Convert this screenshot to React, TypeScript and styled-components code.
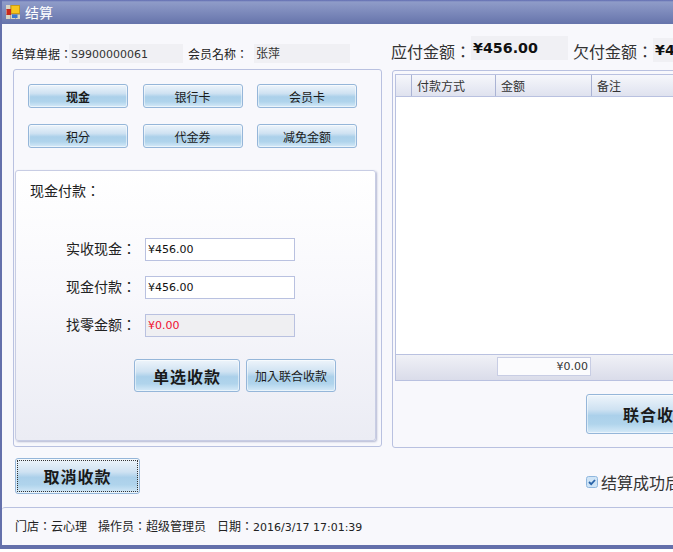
import React from "react";
import styled, { createGlobalStyle, css } from "styled-components";

const Global = createGlobalStyle`
  html, body {
    margin: 0;
    padding: 0;
    background: #ffffff;
    overflow: hidden;
  }
  * {
    box-sizing: border-box;
  }
`;

const FONT = `"Noto Sans CJK TC", "Noto Sans CJK SC", sans-serif`;
const LINE = "#b9c1e0";
const glossy = css`
  background: linear-gradient(180deg, #eef5fb 0%, #cfe2f2 38%, #abd0ea 54%, #b0d4ec 76%, #d6eaf8 100%);
  border: 1px solid #95b6d9;
  border-radius: 3px;
  box-shadow: inset 0 0 0 1px rgba(255, 255, 255, 0.5);
  color: #1a1a1a;
  font-family: ${FONT};
  padding: 0;
  white-space: nowrap;
  flex: none;
`;

const Window = styled.div`
  width: 673px;
  height: 549px;
  overflow: hidden;
  display: flex;
  flex-direction: column;
  background: #f8f8fc;
  font-family: ${FONT};
  color: #222;
  border-left: 2px solid #6470ab;
  border-bottom: 4px solid #6470ab;
`;

const TitleBar = styled.div`
  height: 24px;
  margin-left: -2px;
  flex: none;
  display: flex;
  align-items: center;
  gap: 5px;
  padding-left: 6px;
  background: linear-gradient(180deg, #5f6bb0 0, #8f9cc8 8%, #7f8cbd 45%, #6674ab 100%);
  color: #fff;
  font-size: 14px;
`;

const Content = styled.div`
  flex: 1;
  display: grid;
  grid-template-columns: 369px 400px;
  column-gap: 10px;
  padding: 0 0 0 11px;
  align-content: start;
`;

const Column = styled.div`
  display: flex;
  flex-direction: column;
`;

const Num = styled.span`
  font-family: "DejaVu Sans", sans-serif;
  font-size: 11px;
`;

const MemberRow = styled.div`
  height: 45px;
  padding: 20px 0 6px 0;
  margin-left: -1px;
  display: flex;
  align-items: center;
  font-size: 12px;
`;

const ReadOnly = styled.span<{ $w: number }>`
  width: ${(p) => p.$w}px;
  height: 19px;
  line-height: 18px;
  padding-left: 2px;
  background: #f0f0f4;
  color: #333;
  font-size: 12px;
`;

const MemberLabel = styled.span<{ $w: number; $gap?: number }>`
  width: ${(p) => p.$w}px;
  margin-left: ${(p) => p.$gap ?? 0}px;
  white-space: nowrap;
  line-height: 18px;
`;

const Panel = styled.div`
  height: 378px;
  border: 1px solid ${LINE};
  border-radius: 3px;
  background: #f8f8fc;
  padding: 14px 0 0 1px;
`;

const ModeGrid = styled.div`
  display: grid;
  grid-template-columns: repeat(3, 100px);
  grid-auto-rows: 24px;
  column-gap: 14.5px;
  row-gap: 16px;
  padding-left: 13px;
`;

const ModeButton = styled.button<{ $active?: boolean }>`
  ${glossy}
  font-size: 12px;
  font-weight: ${(p) => (p.$active ? 700 : 400)};
`;

const Card = styled.div`
  width: 361px;
  height: 271px;
  margin-top: 22px;
  border: 1px solid #c8cde4;
  border-radius: 3px;
  background: linear-gradient(180deg, #ffffff 0%, #f8f8fc 45%, #ebecf4 100%);
  box-shadow: 1px 1px 2px #b3b8d2;
  padding: 11px 0 0 14px;
`;

const CardTitle = styled.div`
  font-size: 14px;
  line-height: 16px;
  height: 56px;
`;

const FieldRow = styled.div`
  display: flex;
  align-items: center;
  height: 23px;
  margin-bottom: 15px;
`;

const FieldLabel = styled.span`
  width: 115px;
  text-align: right;
  padding: 0 9px 3px 0;
  font-size: 14px;
  white-space: nowrap;
`;

const Field = styled.div<{ $disabled?: boolean }>`
  width: 150px;
  height: 23px;
  line-height: 22px;
  padding-left: 2px;
  border: 1px solid ${LINE};
  background: ${(p) => (p.$disabled ? "#efeff2" : "#fff")};
  color: ${(p) => (p.$disabled ? "#f01030" : "#111")};
  font-family: "DejaVu Sans", sans-serif;
  font-size: 11px;
`;

const ActionRow = styled.div`
  display: flex;
  gap: 6px;
  padding: 7px 0 0 104px;
`;

const BigButton = styled.button<{ $w: number; $h: number }>`
  ${glossy}
  width: ${(p) => p.$w}px;
  height: ${(p) => p.$h}px;
  font-size: 16px;
  font-weight: 700;
  letter-spacing: 1px;
`;

const SmallAction = styled.button`
  ${glossy}
  width: 90px;
  height: 33px;
  font-size: 12px;
`;

const AmountRow = styled.div`
  height: 46px;
  padding-top: 12px;
  margin-left: -1px;
  display: flex;
  align-items: flex-start;
  font-size: 16px;
  white-space: nowrap;
`;

const AmountLabel = styled.span`
  line-height: 30px;
  color: #333;
`;

const AmountValue = styled.span<{ $w: number; $drop?: number }>`
  width: ${(p) => p.$w}px;
  height: 24px;
  line-height: 24px;
  padding-left: 2px;
  margin-right: 5px;
  margin-top: ${(p) => p.$drop ?? 0}px;
  background: #f0f0f4;
  color: #111;
  font-family: "DejaVu Sans", sans-serif;
  font-size: 14.25px;
  font-weight: 700;
`;

const RightPanel = styled.div`
  height: 378px;
  border: 1px solid ${LINE};
  border-radius: 3px;
  display: flex;
  flex-direction: column;
  margin-top: 0;
`;

const GridBox = styled.div`
  margin: 3px 0 0 2px;
  height: 307px;
  border: 1px solid ${LINE};
  display: flex;
  flex-direction: column;
  background: #fff;
`;

const GridHead = styled.div`
  display: flex;
  height: 22px;
  flex: none;
  background: linear-gradient(180deg, #f6f7fb, #dfe2ef);
  border-bottom: 1px solid ${LINE};
  font-size: 12px;
`;

const HeadCell = styled.div<{ $w: number }>`
  width: ${(p) => p.$w}px;
  flex: none;
  border-right: 1px solid #aab3d4;
  padding-left: 5px;
  line-height: 22px;
  color: #333;
`;

const GridBody = styled.div`
  flex: 1;
`;

const GridFoot = styled.div`
  height: 26px;
  flex: none;
  padding: 2px 0 0 101px;
  border-top: 1px solid ${LINE};
  background: linear-gradient(180deg, #f0f1f6, #dadcea);
`;

const SumBox = styled.div`
  width: 94px;
  height: 19px;
  line-height: 18px;
  padding-right: 2px;
  text-align: right;
  background: #fbfbfd;
  border: 1px solid #c8cde4;
  font-family: "DejaVu Sans", sans-serif;
  font-size: 11px;
  color: #333;
`;

const JoinRow = styled.div`
  padding: 13px 0 0 193px;
`;

const Footer = styled.div`
  display: flex;
  justify-content: flex-start;
  align-items: flex-start;
  height: 59px;
  padding: 10px 0 0 13px;
  flex: none;
`;

const CancelButton = styled.button`
  ${glossy}
  width: 125px;
  height: 36px;
  font-size: 16px;
  font-weight: 700;
  letter-spacing: 1px;
  outline: 1px dotted #333;
  outline-offset: -3px;
`;

const SuccessOption = styled.label`
  margin-left: 446px;
  margin-top: 12px;
  flex: none;
  display: flex;
  align-items: center;
  gap: 3px;
  font-size: 16px;
  white-space: nowrap;
  color: #333;
`;

const CheckMark = styled.svg`
  flex: none;
  width: 12px;
  height: 12px;
`;

const StatusBar = styled.div`
  flex: none;
  height: 39px;
  margin-top: auto;
  border-top: 1px solid ${LINE};
  border-top-left-radius: 3px;
  display: flex;
  align-items: center;
  padding: 0 0 3px 13px;
  font-size: 12px;
  gap: 11px;
  white-space: nowrap;
`;

const AppIcon = () => (
  <svg width="14" height="14" viewBox="0 0 14 14">
    <rect x="0" y="0" width="14" height="14" fill="#d8d4c4" />
    <path d="M0 4.5h14M0 9.5h14M4.5 0v14M9.5 0v14" stroke="#a8a8a0" strokeWidth="1" />
    <rect x="5" y="0.5" width="8.5" height="8" fill="#f7c51e" stroke="#c89a18" />
    <rect x="0.5" y="4" width="4.5" height="6" fill="#c8281c" />
    <rect x="6" y="9.5" width="5.5" height="3.5" fill="#3a78d0" />
  </svg>
);

const modes = ["现金", "银行卡", "会员卡", "积分", "代金券", "减免金额"];

export default function App() {
  return (
    <Window>
      <Global />
      <TitleBar>
        <AppIcon />
        <span>结算</span>
      </TitleBar>
      <Content>
        <Column>
          <MemberRow>
            <MemberLabel $w={57}>结算单据：</MemberLabel>
            <ReadOnly $w={114}>
              <Num>S9900000061</Num>
            </ReadOnly>
            <MemberLabel $w={66} $gap={5}>会员名称：</MemberLabel>
            <ReadOnly $w={96}>张萍</ReadOnly>
          </MemberRow>
          <Panel>
            <ModeGrid>
              {modes.map((m, i) => (
                <ModeButton key={m} $active={i === 0}>
                  {m}
                </ModeButton>
              ))}
            </ModeGrid>
            <Card>
              <CardTitle>现金付款：</CardTitle>
              <FieldRow>
                <FieldLabel>实收现金：</FieldLabel>
                <Field>¥456.00</Field>
              </FieldRow>
              <FieldRow>
                <FieldLabel>现金付款：</FieldLabel>
                <Field>¥456.00</Field>
              </FieldRow>
              <FieldRow>
                <FieldLabel>找零金额：</FieldLabel>
                <Field $disabled>¥0.00</Field>
              </FieldRow>
              <ActionRow>
                <BigButton $w={106} $h={33}>单选收款</BigButton>
                <SmallAction>加入联合收款</SmallAction>
              </ActionRow>
            </Card>
          </Panel>
        </Column>
        <Column>
          <AmountRow>
            <AmountLabel>应付金额：</AmountLabel>
            <AmountValue $w={97}>¥456.00</AmountValue>
            <AmountLabel>欠付金额：</AmountLabel>
            <AmountValue $w={97} $drop={2}>¥456.00</AmountValue>
          </AmountRow>
          <RightPanel>
            <GridBox>
              <GridHead>
                <HeadCell $w={16} />
                <HeadCell $w={84}>付款方式</HeadCell>
                <HeadCell $w={96}>金额</HeadCell>
                <HeadCell $w={200}>备注</HeadCell>
              </GridHead>
              <GridBody />
              <GridFoot>
                <SumBox>¥0.00</SumBox>
              </GridFoot>
            </GridBox>
            <JoinRow>
              <BigButton $w={142} $h={40}>联合收款</BigButton>
            </JoinRow>
          </RightPanel>
        </Column>
      </Content>
      <Footer>
        <CancelButton>取消收款</CancelButton>
        <SuccessOption>
          <CheckMark viewBox="0 0 12 12">
            <rect x="0.5" y="0.5" width="11" height="11" rx="2" fill="#cfe4f6" stroke="#8fb7de" />
            <path d="M3 6l2.2 2.2L9 4" fill="none" stroke="#2a63a8" strokeWidth="1.8" />
          </CheckMark>
          结算成功后打印小票
        </SuccessOption>
      </Footer>
      <StatusBar>
        <span>门店：云心理</span>
        <span>操作员：超级管理员</span>
        <span>
          日期：<Num>2016/3/17 17:01:39</Num>
        </span>
      </StatusBar>
    </Window>
  );
}
